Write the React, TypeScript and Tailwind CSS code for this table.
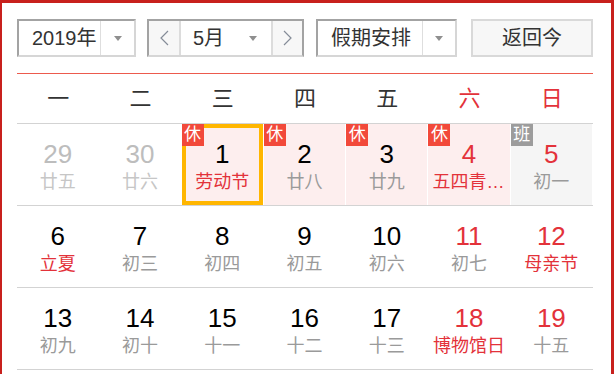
import React from "react";

type Cell = {
  d: number;
  l: string;
  prev?: boolean;
  fest?: boolean;
  wk?: boolean;
  badge?: "休" | "班";
  sel?: boolean;
};

const rows: Cell[][] = [
  [
    { d: 29, l: "廿五", prev: true },
    { d: 30, l: "廿六", prev: true },
    { d: 1, l: "劳动节", fest: true, badge: "休", sel: true },
    { d: 2, l: "廿八", badge: "休" },
    { d: 3, l: "廿九", badge: "休" },
    { d: 4, l: "五四青年节", fest: true, badge: "休", wk: true },
    { d: 5, l: "初一", badge: "班", wk: true },
  ],
  [
    { d: 6, l: "立夏", fest: true },
    { d: 7, l: "初三" },
    { d: 8, l: "初四" },
    { d: 9, l: "初五" },
    { d: 10, l: "初六" },
    { d: 11, l: "初七", wk: true },
    { d: 12, l: "母亲节", fest: true, wk: true },
  ],
  [
    { d: 13, l: "初九" },
    { d: 14, l: "初十" },
    { d: 15, l: "十一" },
    { d: 16, l: "十二" },
    { d: 17, l: "十三" },
    { d: 18, l: "博物馆日", fest: true, wk: true },
    { d: 19, l: "十五", wk: true },
  ],
];

const weekdays = ["一", "二", "三", "四", "五", "六", "日"];

function Caret() {
  return (
    <span className="w-0 h-0 border-l-[4px] border-r-[4px] border-t-[5px] border-l-transparent border-r-transparent border-t-[#8f8f8f]" />
  );
}

function Chevron({ dir }: { dir: "l" | "r" }) {
  return (
    <svg width="9" height="16" viewBox="0 0 9 16" fill="none">
      <polyline
        points={dir === "l" ? "8,1 1,8 8,15" : "1,1 8,8 1,15"}
        stroke="#858c98"
        strokeWidth="1.2"
      />
    </svg>
  );
}

function DayCell({ c }: { c: Cell }) {
  const bg =
    c.badge === "休" ? "bg-[#fdeeee]" : c.badge === "班" ? "bg-[#f5f5f5]" : "bg-white";
  const numColor = c.prev
    ? "text-[#bdbdbd]"
    : c.wk
    ? "text-[#e3323a]"
    : "text-black";
  const lunarColor = c.prev
    ? "text-[#c6c6c6]"
    : c.fest
    ? "text-[#e3323a]"
    : "text-[#9a9a9a]";
  return (
    <div className="pr-px h-full">
      <div className={`relative h-full ${bg} flex flex-col items-center pt-[15px]`}>
        <div className={`text-[26px] leading-[30px] ${numColor}`}>{c.d}</div>
        <div
          className={`mt-[2px] w-full px-[4px] text-center truncate text-[18px] leading-[22px] ${lunarColor}`}
        >
          {c.l}
        </div>
        {c.sel && (
          <div className="absolute inset-0 border-4 border-[#ffb600]" />
        )}
        {c.badge && (
          <div
            className={`absolute left-0 top-0 w-[22px] h-[22px] text-white text-[17px] leading-[22px] text-center ${
              c.badge === "休" ? "bg-[#f2493a]" : "bg-[#9c9c9c]"
            }`}
          >
            {c.badge}
          </div>
        )}
      </div>
    </div>
  );
}

export default function App() {
  return (
    <div className="w-[614px] h-[374px] overflow-hidden bg-white font-['Liberation_Sans','Noto_Sans_CJK_SC',sans-serif] border-l-2 border-t-[3px] border-r-[3px] border-[#c8201d] pl-[15px] pr-[18px] pt-[16px]">
      {/* toolbar */}
      <div className="flex h-[38px] text-[20px] text-[#333]">
        <div className="w-[119px] flex border-2 border-t-[#a3a3a3] border-l-[#a3a3a3] border-b-[#d6d6d6] border-r-[#d6d6d6] bg-white">
          <div className="w-[81px] pl-[13px] flex items-center leading-none">2019年</div>
          <div className="flex-1 border-l border-[#dedede] flex items-center justify-center">
            <Caret />
          </div>
        </div>
        <div className="ml-[11px] w-[157px] flex border-2 border-t-[#a3a3a3] border-l-[#a3a3a3] border-b-[#d6d6d6] border-r-[#a3a3a3]">
          <div className="w-[32px] bg-[#f7f7f7] border-r-2 border-[#dcdcdc] flex items-center justify-center">
            <Chevron dir="l" />
          </div>
          <div className="flex-1 bg-white flex items-center pl-[12px] pr-[14px] leading-none">
            <span>5月</span>
            <span className="ml-auto flex">
              <Caret />
            </span>
          </div>
          <div className="w-[31px] bg-[#f7f7f7] border-l-2 border-[#dcdcdc] flex items-center justify-center">
            <Chevron dir="r" />
          </div>
        </div>
        <div className="ml-[12px] w-[141px] flex border-2 border-t-[#a3a3a3] border-l-[#a3a3a3] border-b-[#d6d6d6] border-r-[#d6d6d6] bg-white">
          <div className="w-[104px] pl-[13px] flex items-center leading-none">假期安排</div>
          <div className="flex-1 border-l border-[#dedede] flex items-center justify-center">
            <Caret />
          </div>
        </div>
        <div className="ml-[14px] w-[122px] flex items-center justify-center border-2 border-[#d9d9d9] bg-[#f7f7f7] leading-none">
          返回今
        </div>
      </div>

      {/* red line */}
      <div className="mt-[16px] h-px bg-[#ec5a4d]" />

      {/* weekday header */}
      <div className="grid grid-cols-7 h-[50px] border-b border-[#d3d3d3] items-center text-center text-[22px]">
        {weekdays.map((w, i) => (
          <div key={w} className={i >= 5 ? "text-[#e3323a]" : "text-[#333]"}>
            {w}
          </div>
        ))}
      </div>

      {/* days */}
      {rows.map((r, ri) => (
        <div key={ri} className="grid grid-cols-7 h-[82px] border-b border-[#d3d3d3]">
          {r.map((c, ci) => (
            <DayCell key={ci} c={c} />
          ))}
        </div>
      ))}
    </div>
  );
}
